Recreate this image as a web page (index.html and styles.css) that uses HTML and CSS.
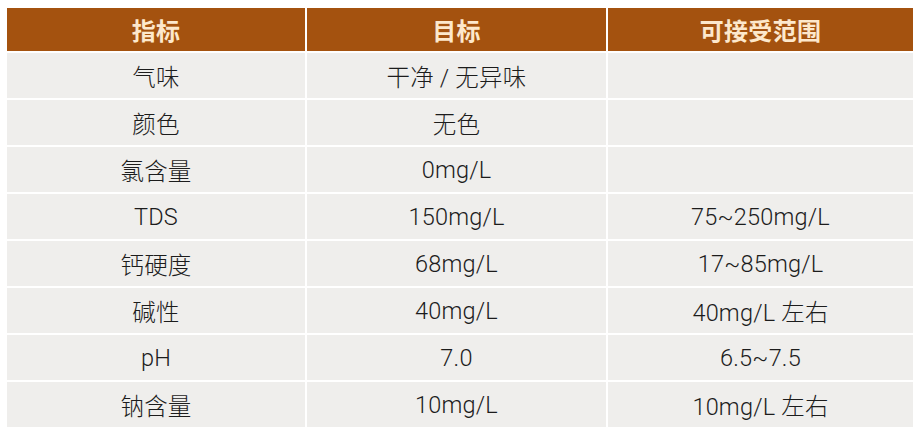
FILE: index.html
```html
<!DOCTYPE html>
<html lang="zh">
<head>
<meta charset="utf-8">
<link rel="stylesheet" href="styles.css">
</head>
<body>
<table class="spec">
  <colgroup><col class="c1"><col class="c2"><col class="c3"></colgroup>
  <thead>
    <tr><th>指标</th><th>目标</th><th>可接受范围</th></tr>
  </thead>
  <tbody>
    <tr><td>气味</td><td>干净 / 无异味</td><td></td></tr>
    <tr><td>颜色</td><td>无色</td><td></td></tr>
    <tr><td>氯含量</td><td>0mg/L</td><td></td></tr>
    <tr><td>TDS</td><td>150mg/L</td><td>75~250mg/L</td></tr>
    <tr><td>钙硬度</td><td>68mg/L</td><td>17~85mg/L</td></tr>
    <tr><td>碱性</td><td>40mg/L</td><td>40mg/L 左右</td></tr>
    <tr><td>pH</td><td>7.0</td><td>6.5~7.5</td></tr>
    <tr><td>钠含量</td><td>10mg/L</td><td>10mg/L 左右</td></tr>
  </tbody>
</table>
</body>
</html>
```
FILE: styles.css
```css
html, body {
  margin: 0;
  padding: 0;
  background: #ffffff;
}
body {
  font-family: Roboto, "Liberation Sans", "Noto Sans CJK SC", sans-serif;
  color: #1c1c1c;
}
.spec {
  margin: 6px 0 0 5px;
  width: 908px;
  border-collapse: collapse;
  table-layout: fixed;
}
.spec .c1 { width: 300px; }
.spec .c2 { width: 301px; }
.spec .c3 { width: 307px; }
.spec th,
.spec td {
  border: 2px solid #ffffff;
  text-align: center;
  vertical-align: middle;
  padding: 0;
  font-size: 23.5px;
  letter-spacing: 0.2px;
}
.spec th {
  height: 43px;
  font-family: "Liberation Sans", "Noto Sans CJK SC", sans-serif;
  font-size: 24px;
  background: #a4520f;
  color: #fde8cc;
  font-weight: bold;
  letter-spacing: 0.3px;
}
.spec td {
  height: 45px;
  background: #efeeec;
  font-weight: 300;
}
```
